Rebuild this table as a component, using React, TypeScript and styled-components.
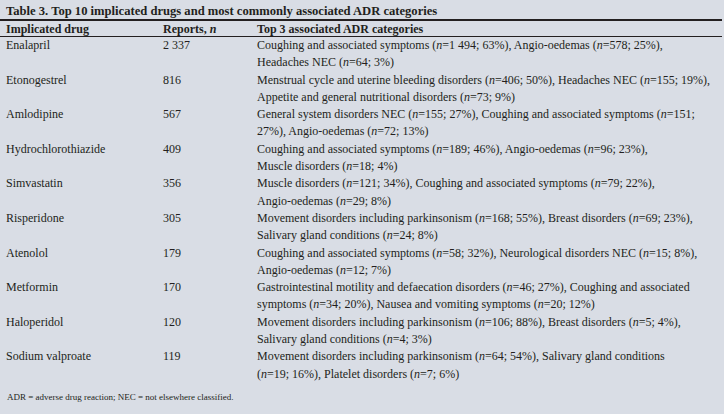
import styled, { createGlobalStyle } from "styled-components";

const GlobalStyle = createGlobalStyle`
  html, body {
    margin: 0;
    padding: 0;
    background: #d9dde5;
  }
`;

type Row = { drug: string; reports: string; cats: React.ReactNode };

const N = () => <i>n</i>;

const rows: Row[] = [
  {
    drug: "Enalapril",
    reports: "2 337",
    cats: <>Coughing and associated symptoms (<N />=1 494; 63%), Angio-oedemas (<N />=578; 25%),<br />Headaches NEC (<N />=64; 3%)</>,
  },
  {
    drug: "Etonogestrel",
    reports: "816",
    cats: <>Menstrual cycle and uterine bleeding disorders (<N />=406; 50%), Headaches NEC (<N />=155; 19%),<br />Appetite and general nutritional disorders (<N />=73; 9%)</>,
  },
  {
    drug: "Amlodipine",
    reports: "567",
    cats: <>General system disorders NEC (<N />=155; 27%), Coughing and associated symptoms (<N />=151;<br />27%), Angio-oedemas (<N />=72; 13%)</>,
  },
  {
    drug: "Hydrochlorothiazide",
    reports: "409",
    cats: <>Coughing and associated symptoms (<N />=189; 46%), Angio-oedemas (<N />=96; 23%),<br />Muscle disorders (<N />=18; 4%)</>,
  },
  {
    drug: "Simvastatin",
    reports: "356",
    cats: <>Muscle disorders (<N />=121; 34%), Coughing and associated symptoms (<N />=79; 22%),<br />Angio-oedemas (<N />=29; 8%)</>,
  },
  {
    drug: "Risperidone",
    reports: "305",
    cats: <>Movement disorders including parkinsonism (<N />=168; 55%), Breast disorders (<N />=69; 23%),<br />Salivary gland conditions (<N />=24; 8%)</>,
  },
  {
    drug: "Atenolol",
    reports: "179",
    cats: <>Coughing and associated symptoms (<N />=58; 32%), Neurological disorders NEC (<N />=15; 8%),<br />Angio-oedemas (<N />=12; 7%)</>,
  },
  {
    drug: "Metformin",
    reports: "170",
    cats: <>Gastrointestinal motility and defaecation disorders (<N />=46; 27%), Coughing and associated<br />symptoms (<N />=34; 20%), Nausea and vomiting symptoms (<N />=20; 12%)</>,
  },
  {
    drug: "Haloperidol",
    reports: "120",
    cats: <>Movement disorders including parkinsonism (<N />=106; 88%), Breast disorders (<N />=5; 4%),<br />Salivary gland conditions (<N />=4; 3%)</>,
  },
  {
    drug: "Sodium valproate",
    reports: "119",
    cats: <>Movement disorders including parkinsonism (<N />=64; 54%), Salivary gland conditions<br />(<N />=19; 16%), Platelet disorders (<N />=7; 6%)</>,
  },
];

const Page = styled.div`
  width: 724px;
  height: 414px;
  background: #d9dde5;
  color: #231f20;
  font-family: "Liberation Serif", "DejaVu Serif", serif;
  padding-top: 3px;
  box-sizing: border-box;
  overflow: hidden;
`;

const Title = styled.div`
  font-weight: bold;
  font-size: 12.6px;
  line-height: 16px;
  padding: 0 6px;
  border-bottom: 2px solid #231f20;
  margin-right: 2px;
`;

const Table = styled.table`
  width: 722px;
  table-layout: fixed;
  border-collapse: collapse;
  font-size: 12px;
`;

const Head = styled.th`
  text-align: left;
  font-weight: bold;
  font-size: 12px;
  line-height: 14px;
  padding: 1px 0 0 6px;
  border-bottom: 1px solid #231f20;
`;

const Cell = styled.td`
  vertical-align: top;
  line-height: 17.3px;
  padding: 0 0 0 6px;
  white-space: nowrap;
`;

const Note = styled.div`
  font-size: 9px;
  line-height: 11px;
  padding: 9px 0 0 7px;
`;

export default function App() {
  return (
    <Page>
      <GlobalStyle />
      <Title>Table 3. Top 10 implicated drugs and most commonly associated ADR categories</Title>
      <Table>
        <colgroup>
          <col style={{ width: 157 }} />
          <col style={{ width: 94 }} />
          <col />
        </colgroup>
        <thead>
          <tr>
            <Head>Implicated drug</Head>
            <Head>
              Reports, <i>n</i>
            </Head>
            <Head>Top 3 associated ADR categories</Head>
          </tr>
        </thead>
        <tbody>
          {rows.map((r) => (
            <tr key={r.drug}>
              <Cell>{r.drug}</Cell>
              <Cell>{r.reports}</Cell>
              <Cell>{r.cats}</Cell>
            </tr>
          ))}
        </tbody>
      </Table>
      <Note>ADR = adverse drug reaction; NEC = not elsewhere classified.</Note>
    </Page>
  );
}
